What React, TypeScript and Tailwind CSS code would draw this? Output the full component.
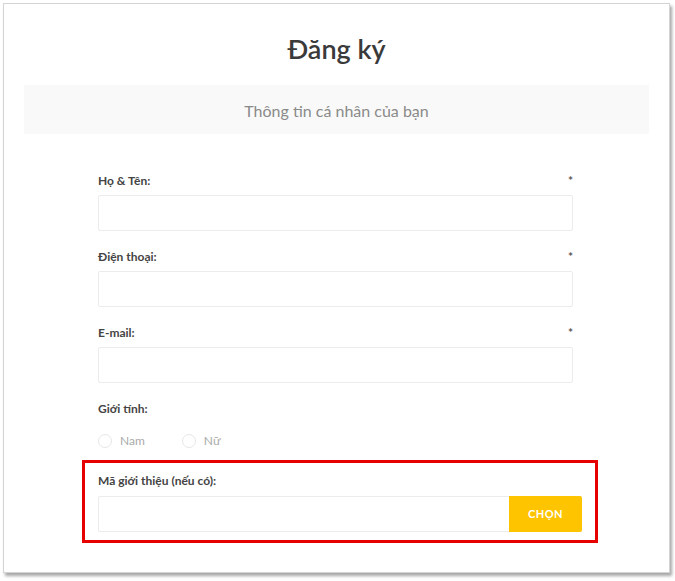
export default function App() {
  const fields = ["Họ & Tên:", "Điện thoại:", "E-mail:"];

  return (
    <div className="w-[675px] h-[581px] bg-white pl-[3px] pt-[3px] font-['Lato','Noto_Sans',sans-serif]">
      <div className="w-[667px] h-[570px] bg-white border border-[#d4d4d4] shadow-[2px_3px_3px_rgba(0,0,0,0.35)]">
        <h1 className="pt-[29px] text-center text-[27px] leading-[32px] font-semibold text-[#3a3a3a]">Đăng ký</h1>

        <div className="mx-[20px] mt-[20px] h-[49px] bg-[#f9f9f9] flex items-center justify-center pt-[3px] text-[16px] text-[#8a8a8a]">
          Thông tin cá nhân của bạn
        </div>

        <div className="ml-[94px] w-[475px] pt-[39px]">
          {fields.map((label) => (
            <div key={label} className="mb-[18px]">
              <div className="flex justify-between items-center h-[16px] text-[12px] font-bold text-[#444]">
                <span>{label}</span>
                <span className="text-[#555]">*</span>
              </div>
              <div className="mt-[6px] h-[36px] rounded-[2px] border border-[#ececec] bg-white" />
            </div>
          ))}

          <div className="h-[16px] flex items-center text-[12px] font-bold text-[#444]">Giới tính:</div>
          <div className="mt-[15px] flex items-center text-[12px] text-[#aaa]">
            <span className="w-[14px] h-[14px] rounded-full border border-[#e6e6e6]" />
            <span className="ml-[8px]">Nam</span>
            <span className="ml-[37px] w-[14px] h-[14px] rounded-full border border-[#e6e6e6]" />
            <span className="ml-[8px]">Nữ</span>
          </div>
        </div>

        <div className="ml-[78px] mt-[10px] w-[516px] h-[83px] border-[3px] border-[#e60000] pl-[13px] pr-[13px] pt-[10px]">
          <div className="h-[16px] flex items-center text-[12px] font-bold text-[#444]">Mã giới thiệu (nếu có):</div>
          <div className="mt-[7px] flex h-[36px]">
            <div className="flex-1 rounded-l-[2px] border border-r-0 border-[#ececec] bg-white" />
            <button className="w-[73px] h-[36px] rounded-r-[2px] bg-[#ffc400] text-white text-[11px] font-bold tracking-[0.5px]">CHỌN</button>
          </div>
        </div>
      </div>
    </div>
  );
}
